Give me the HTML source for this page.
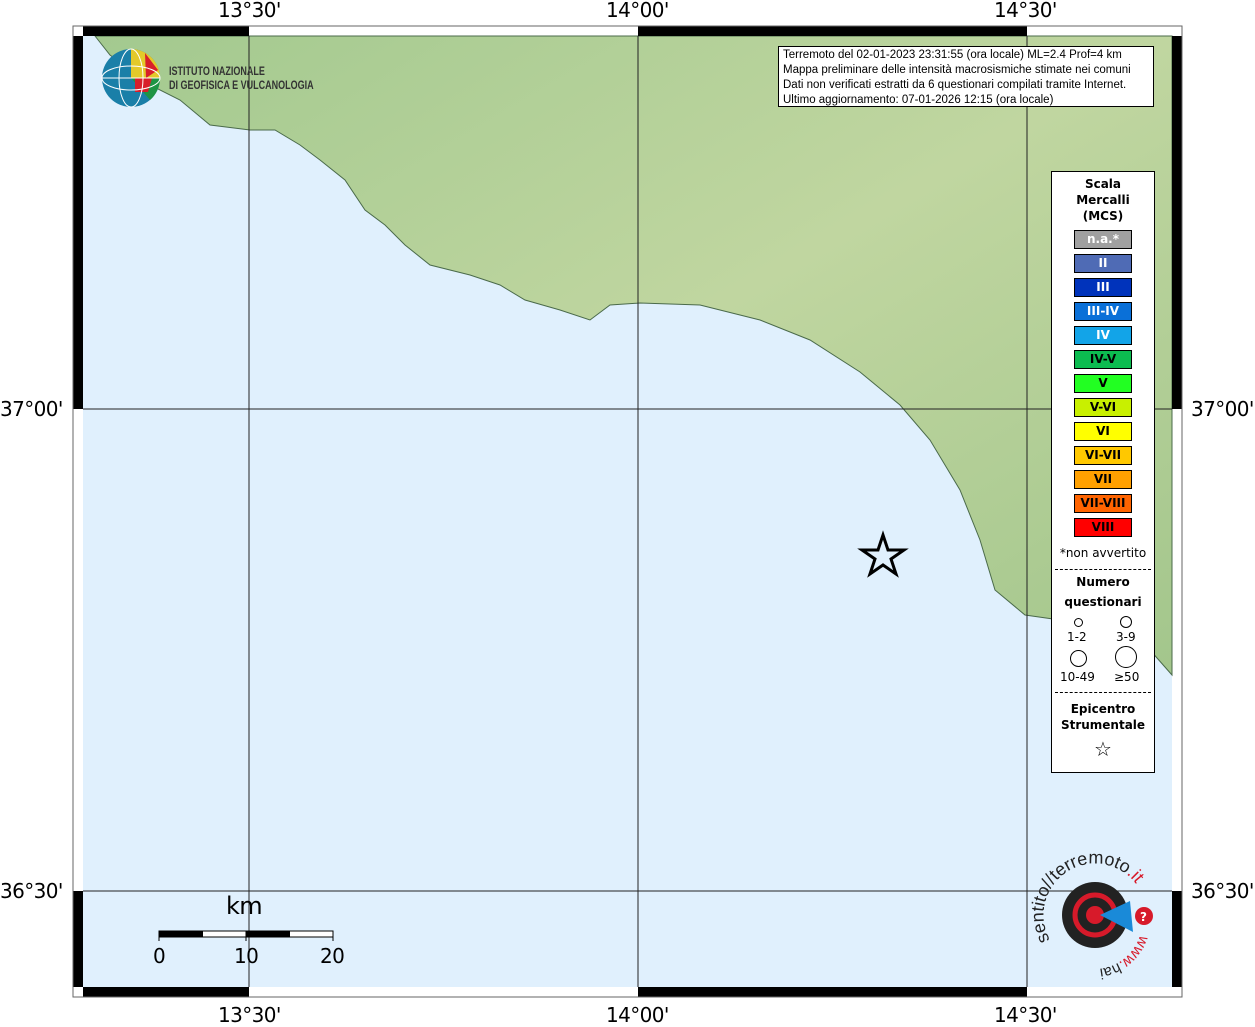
<!DOCTYPE html>
<html><head><meta charset="utf-8"><style>
body{margin:0;width:1255px;height:1024px;background:#fff;position:relative;overflow:hidden;font-family:"DejaVu Sans","Liberation Sans",sans-serif}
.lbl{position:absolute;font-size:20px;letter-spacing:-0.6px;color:#000;font-family:"DejaVu Sans",sans-serif;white-space:nowrap}
.lg{position:absolute;left:1051px;top:171px;width:102px;height:600px;border:1px solid #000;background:#fff;font-size:12px;text-align:center}
.sw{position:absolute;left:22px;width:56px;height:17px;border:1px solid #000;font-weight:bold;font-size:12px;line-height:17px;color:#fff}
.ib{position:absolute;left:778px;top:46px;width:376px;height:61px;border:1px solid #000;background:#fff;font-size:11.5px;line-height:15px;padding-left:4px;padding-top:1px;box-sizing:border-box;white-space:nowrap;overflow:hidden;font-family:"Liberation Sans",sans-serif}
</style></head><body>
<svg width="1255" height="1024" style="position:absolute;left:0;top:0">
<defs><linearGradient id="g" x1="0" y1="0" x2="1" y2="1"><stop offset="0" stop-color="#a3c98f"/><stop offset="0.5" stop-color="#c0d6a0"/><stop offset="1" stop-color="#a3c68c"/></linearGradient></defs>
<rect x="73" y="26" width="1109" height="971" fill="#fff" stroke="#666"/>
<rect x="83" y="36" width="1089" height="951" fill="#e0f0fd"/>
<polygon fill="url(#g)" stroke="#4a6a4a" stroke-width="1" points="95,36 110,55 150,85 180,100 210,125 250,130 275,130 300,145 320,160 345,180 365,210 385,225 405,245 430,265 470,275 500,285 525,300 560,310 590,320 610,305 640,303 700,305 760,320 810,340 860,372 900,405 930,440 960,490 980,540 995,590 1025,615 1060,620 1120,630 1150,650 1172,675 1172,36"/>
<g stroke="#222" stroke-width="1"><line x1="249" y1="36" x2="249" y2="987"/><line x1="638" y1="36" x2="638" y2="987"/><line x1="1027" y1="36" x2="1027" y2="987"/><line x1="83" y1="409" x2="1172" y2="409"/><line x1="83" y1="891" x2="1172" y2="891"/></g>
<g fill="#000"><rect x="83" y="26" width="166" height="10"/><rect x="638" y="26" width="389" height="10"/><rect x="83" y="987" width="166" height="10"/><rect x="638" y="987" width="389" height="10"/>
<rect x="73" y="36" width="10" height="373"/><rect x="73" y="891" width="10" height="96"/><rect x="1172" y="36" width="10" height="373"/><rect x="1172" y="891" width="10" height="96"/></g>
<rect x="73" y="26" width="1109" height="971" fill="none" stroke="#666"/>
<polygon points="883,535 888,550 904,550 891,559 896,574 883,565 870,574 875,559 862,550 878,550" fill="none" stroke="#000" stroke-width="3"/>
<rect x="159" y="931" width="174" height="6" fill="#fff" stroke="#000"/>
<rect x="159" y="931" width="44" height="6" fill="#000"/><rect x="246" y="931" width="44" height="6" fill="#000"/>
<line x1="159" y1="931" x2="159" y2="941" stroke="#000"/><line x1="246" y1="931" x2="246" y2="941" stroke="#000"/><line x1="333" y1="931" x2="333" y2="941" stroke="#000"/>
<circle cx="131" cy="78" r="29" fill="#1a7fa8"/>
<path d="M131,49 A29,29 0 0 1 160,78 L131,78Z" fill="#e3c92a"/>
<path d="M145,53 L158,70 L146,78Z" fill="#d81e2a"/>
<path d="M131,78 L160,78 A29,29 0 0 1 150,100Z" fill="#1e9444"/>
<path d="M135,78 L152,78 L148,92 L135,92Z" fill="#d81e2a"/>
<g stroke="#fff" stroke-width="1" fill="none"><ellipse cx="131" cy="78" rx="29" ry="12"/><ellipse cx="131" cy="78" rx="12" ry="29"/><line x1="102" y1="78" x2="160" y2="78"/></g>
<circle cx="1095" cy="915" r="33" fill="#222"/>
<circle cx="1095" cy="915" r="20" fill="none" stroke="#d71a2a" stroke-width="5"/>
<circle cx="1095" cy="915" r="9" fill="#d71a2a"/>
<polygon points="1100,915 1130,901 1133,932" fill="#1a8ad8"/>
<circle cx="1144" cy="916" r="9" fill="#d71a2a"/>
<text x="1140" y="921" font-size="12" fill="#fff" font-weight="bold">?</text>
<path id="arc" d="M1050,940 A48,48 0 1 1 1140,890" fill="none"/>
<text font-size="18" fill="#222" font-family="Liberation Sans,sans-serif"><textPath href="#arc">sentito//terremoto<tspan fill="#d71a2a">.it</tspan></textPath></text>
<path id="arc2" d="M1140,935 A48,48 0 0 1 1060,955" fill="none"/>
<text font-size="15" fill="#d71a2a" font-family="Liberation Sans,sans-serif"><textPath href="#arc2">www.<tspan fill="#222">hai</tspan></textPath></text>
</svg>
<div style="position:absolute;left:169px;top:64px;font-size:12px;line-height:14px;color:#333;font-weight:bold;font-family:'Liberation Sans',sans-serif;transform:scaleX(0.75);transform-origin:left;white-space:nowrap">ISTITUTO NAZIONALE<br>DI GEOFISICA E VULCANOLOGIA</div>
<div class="lbl" style="left:218px;top:-2px">13°30'</div><div class="lbl" style="left:606px;top:-2px">14°00'</div><div class="lbl" style="left:994px;top:-2px">14°30'</div>
<div class="lbl" style="left:218px;top:1003px">13°30'</div><div class="lbl" style="left:606px;top:1003px">14°00'</div><div class="lbl" style="left:994px;top:1003px">14°30'</div>
<div class="lbl" style="left:0px;top:397px">37°00'</div><div class="lbl" style="left:0px;top:879px">36°30'</div>
<div class="lbl" style="left:1191px;top:397px">37°00'</div><div class="lbl" style="left:1191px;top:879px">36°30'</div>
<div class="lbl" style="left:226px;top:892px;font-size:24px">km</div>
<div class="lbl" style="left:153px;top:944px">0</div><div class="lbl" style="left:234px;top:944px">10</div><div class="lbl" style="left:320px;top:944px">20</div>
<div class="ib">Terremoto del 02-01-2023 23:31:55 (ora locale) ML=2.4 Prof=4 km<br>Mappa preliminare delle intensità macrosismiche stimate nei comuni<br>Dati non verificati estratti da 6 questionari compilati tramite Internet.<br>Ultimo aggiornamento: 07-01-2026 12:15 (ora locale)</div>
<div class="lg">
<div style="position:absolute;top:4px;width:100%;font-weight:bold;line-height:16px">Scala<br>Mercalli<br>(MCS)</div>
<div class="sw" style="top:58px;background:#a0a0a0">n.a.*</div>
<div class="sw" style="top:82px;background:#4f6bb5">II</div>
<div class="sw" style="top:106px;background:#0033bb">III</div>
<div class="sw" style="top:130px;background:#0a70d8">III-IV</div>
<div class="sw" style="top:154px;background:#12a4e8">IV</div>
<div class="sw" style="top:178px;background:#0cbc50;color:#000">IV-V</div>
<div class="sw" style="top:202px;background:#22ff22;color:#000">V</div>
<div class="sw" style="top:226px;background:#c8f000;color:#000">V-VI</div>
<div class="sw" style="top:250px;background:#ffff00;color:#000">VI</div>
<div class="sw" style="top:274px;background:#ffc800;color:#000">VI-VII</div>
<div class="sw" style="top:298px;background:#ffa000;color:#000">VII</div>
<div class="sw" style="top:322px;background:#ff6400;color:#000">VII-VIII</div>
<div class="sw" style="top:346px;background:#ff0000;color:#000">VIII</div>
<div style="position:absolute;top:374px;width:100%">*non avvertito</div>
<div style="position:absolute;top:397px;left:3px;width:96px;border-top:1px dashed #000"></div>
<div style="position:absolute;top:400px;width:100%;font-weight:bold;line-height:20px">Numero<br>questionari</div>
<div style="position:absolute;top:446px;left:22px;width:7px;height:7px;border:1px solid #000;border-radius:50%"></div>
<div style="position:absolute;top:444px;left:68px;width:10px;height:10px;border:1px solid #000;border-radius:50%"></div>
<div style="position:absolute;top:458px;left:15px">1-2</div><div style="position:absolute;top:458px;left:64px">3-9</div>
<div style="position:absolute;top:478px;left:18px;width:15px;height:15px;border:1.5px solid #000;border-radius:50%"></div>
<div style="position:absolute;top:474px;left:63px;width:20px;height:20px;border:1.5px solid #000;border-radius:50%"></div>
<div style="position:absolute;top:498px;left:8px">10-49</div><div style="position:absolute;top:498px;left:62px">≥50</div>
<div style="position:absolute;top:520px;left:3px;width:96px;border-top:1px dashed #000"></div>
<div style="position:absolute;top:529px;width:100%;font-weight:bold;line-height:16px">Epicentro<br>Strumentale</div>
<div style="position:absolute;top:565px;width:100%;font-size:20px">☆</div>
</div>
</body></html>
